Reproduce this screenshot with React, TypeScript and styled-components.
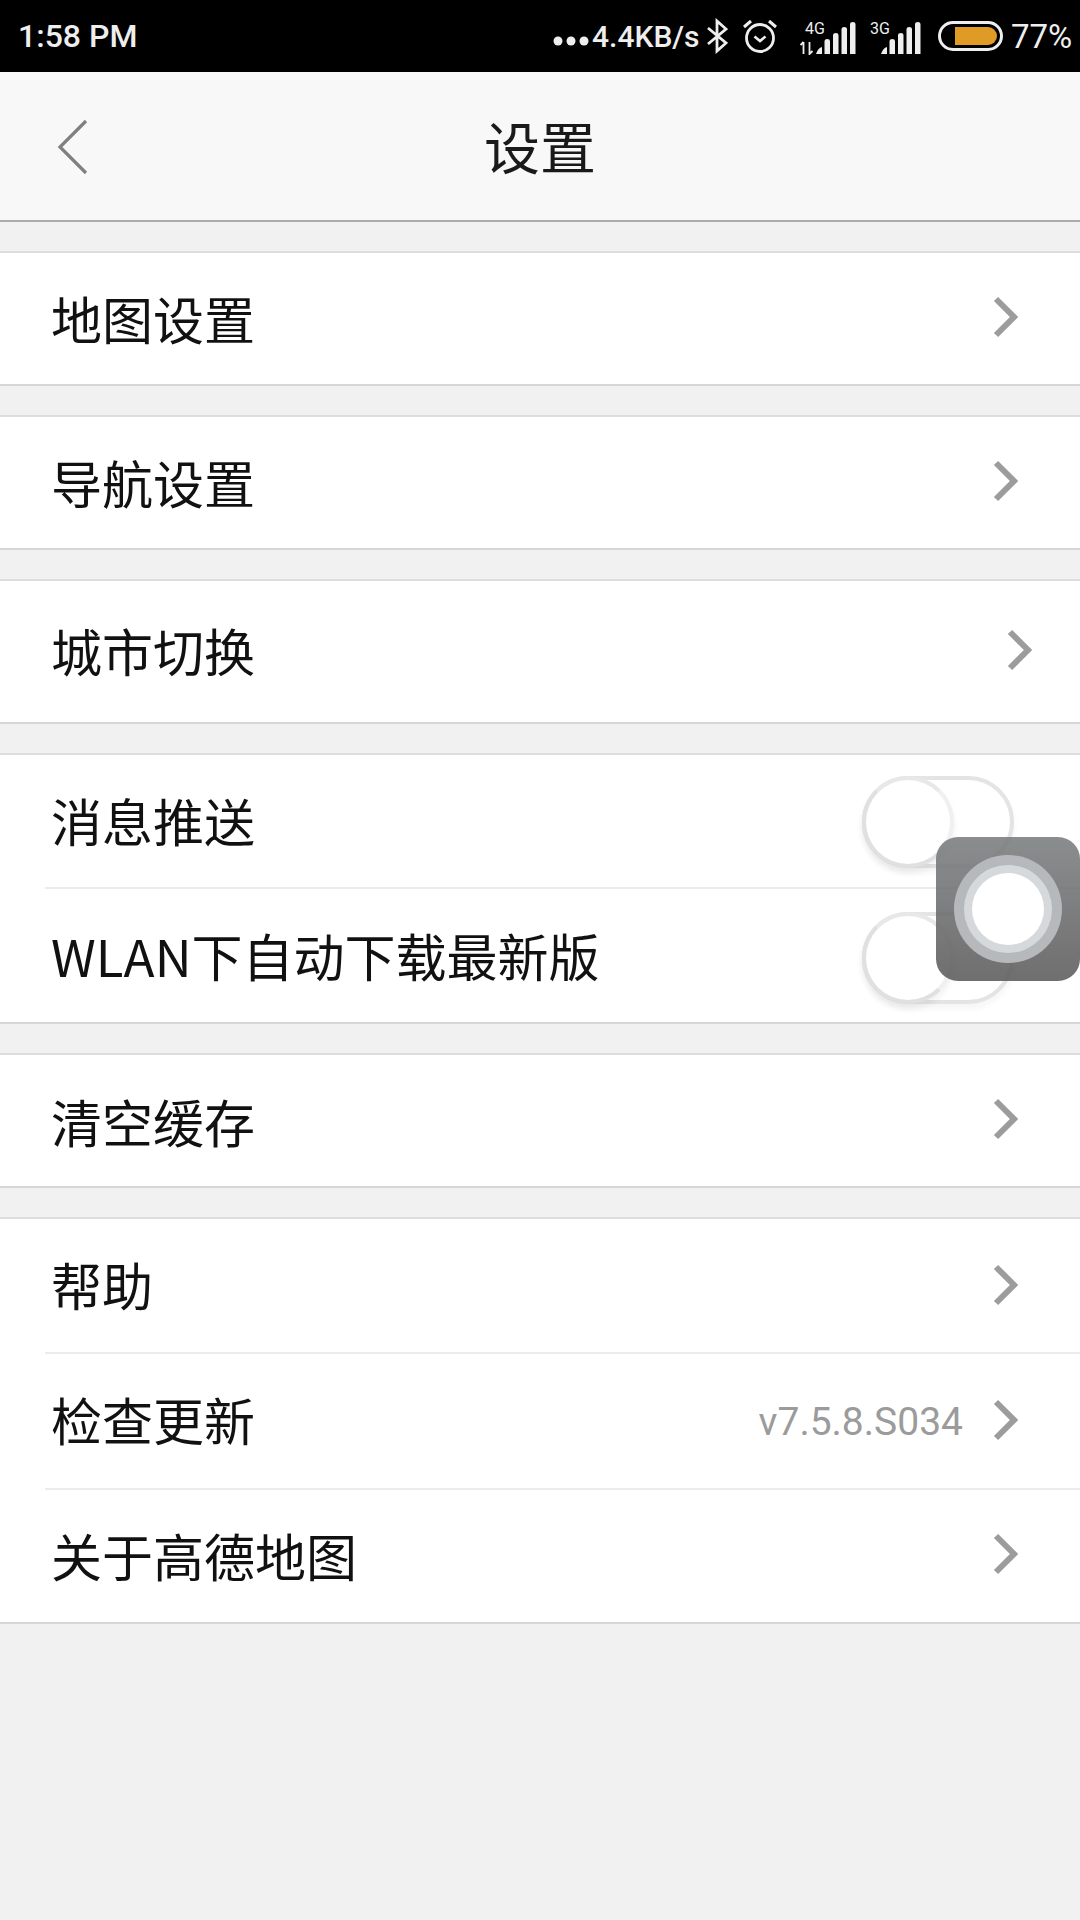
import React from 'react'
import styled, { createGlobalStyle } from 'styled-components'

const GlobalStyle = createGlobalStyle`
  html, body { margin: 0; padding: 0; background: #f1f1f1; }
  * { box-sizing: border-box; }
`

const Page = styled.div`
  position: relative;
  width: 1080px;
  height: 1920px;
  overflow: hidden;
  background: #f1f1f1;
  font-family: "Noto Sans CJK SC", "Noto Sans", sans-serif;
`

const StatusBar = styled.div`
  height: 72px;
  background: #000;
  color: #eee;
  display: flex;
  align-items: center;
  padding: 0 8px 0 18px;
  font-family: Roboto, sans-serif;
`

const Clock = styled.span`
  font-size: 32px;
  font-weight: 500;
  flex: 1;
`

const StatusGroup = styled.div`
  display: flex;
  align-items: center;
`

const Dots = styled.svg`
  margin-right: 3px;
  margin-top: 10px;
`

const Speed = styled.span`
  font-size: 30px;
  font-weight: 500;
  width: 112px;
  white-space: nowrap;
`

const StatusIcon = styled.svg<{ $left: number }>`
  display: block;
  margin-left: ${(p) => p.$left}px;
`

const Percent = styled.span`
  font-size: 33px;
  margin-left: 8px;
  width: 61px;
`

const Header = styled.div`
  height: 150px;
  background: #f8f8f8;
  border-bottom: 2px solid #ababab;
  display: flex;
  align-items: center;
  justify-content: center;
  position: relative;
`

const BackIcon = styled.svg`
  position: absolute;
  left: 57px;
  top: 46px;
`

const Title = styled.h1`
  margin: 0 0 4px;
  font-size: 56px;
  font-weight: 400;
  color: #1a1a1a;
`

const List = styled.div`
  display: flex;
  flex-direction: column;
  gap: 29px;
  padding-top: 29px;
`

const Group = styled.div`
  background: #fff;
  border-top: 2px solid #dddddd;
  border-bottom: 2px solid #d6d6d6;
`

const Row = styled.div<{ $height: number; $divider?: boolean }>`
  height: ${(p) => p.$height}px;
  position: relative;
  display: flex;
  align-items: center;
  padding: 0 0 0 51px;
  ${(p) =>
    p.$divider &&
    `&::after {
      content: '';
      position: absolute;
      left: 45px;
      right: 0;
      bottom: 0;
      height: 2px;
      background: #ececec;
    }`}
`

// $lift nudges the text up (or down, when negative) inside its row
const Label = styled.span<{ $lift?: number }>`
  flex: 1;
  font-size: 51px;
  color: #111;
  white-space: nowrap;
  margin-top: ${(p) => -2 * (p.$lift ?? 0)}px;
`

const Version = styled.span`
  font-family: Roboto, sans-serif;
  font-size: 39px;
  color: #9b9b9b;
  margin-right: 28px;
`

const Chevron = styled.svg<{ $right: number }>`
  margin-right: ${(p) => p.$right}px;
  margin-top: -4px;
  display: block;
`

const ToggleTrack = styled.div<{ $offset: number }>`
  position: relative;
  width: 152px;
  height: 92px;
  margin-right: 66px;
  margin-top: ${(p) => p.$offset}px;
  border: 4px solid #e4e4e4;
  border-radius: 46px;
  box-shadow: 0 5px 6px rgba(0, 0, 0, 0.04);
`

const ToggleKnob = styled.div`
  position: absolute;
  left: -4px;
  top: -4px;
  width: 92px;
  height: 92px;
  border-radius: 50%;
  background: #fff;
  border: 4px solid #e0e0e0;
  border-right-color: #f0f0f0;
  border-top-color: #e8e8e8;
  box-shadow: 0 5px 6px rgba(0, 0, 0, 0.06);
`

const FloatingBall = styled.div`
  position: absolute;
  left: 936px;
  top: 837px;
  width: 144px;
  height: 144px;
  border-radius: 22px;
  background: linear-gradient(180deg, rgba(122, 125, 127, 0.88), rgba(92, 91, 91, 0.88));
  display: flex;
  align-items: center;
  justify-content: center;
`

const BallRing = styled.div`
  width: 108px;
  height: 108px;
  border-radius: 50%;
  background: #b6b9bb;
  display: flex;
  align-items: center;
  justify-content: center;
`

const BallInnerRing = styled.div`
  width: 88px;
  height: 88px;
  border-radius: 50%;
  background: #d6d9db;
  display: flex;
  align-items: center;
  justify-content: center;
`

const BallCore = styled.div`
  width: 72px;
  height: 72px;
  border-radius: 50%;
  background: #fff;
`

const RowChevron: React.FC<{ right?: number }> = ({ right = 61 }) => (
  <Chevron $right={right} width="28" height="44" viewBox="0 0 28 44">
    <path d="M5 4 L23 22 L5 40" fill="none" stroke="#9c9c9c" strokeWidth="6" strokeLinejoin="miter" />
  </Chevron>
)

const Bars: React.FC<{ x: number }> = ({ x }) => (
  <path
    transform={`translate(${x} 0)`}
    d="M0 37h6v-7q-4 1-6 7zM8.500 37h5.500V24q0-2-2.700-2t-2.800 2zM17 37h5.500V18q0-2-2.700-2t-2.800 2zM25.500 37h5.500V12q0-2-2.700-2t-2.800 2zM34 37h5.500V7q0-2-2.700-2t-2.800 2z"
    fill="#eee"
  />
)

const App: React.FC = () => (
  <Page>
    <GlobalStyle />
    <StatusBar>
      <Clock>1:58 PM</Clock>
      <StatusGroup>
        <Dots width="36" height="10" viewBox="0 0 36 10">
          <circle cx="5" cy="5" r="4.500" fill="#eee" />
          <circle cx="18" cy="5" r="4.500" fill="#eee" />
          <circle cx="31" cy="5" r="4.500" fill="#eee" />
        </Dots>
        <Speed>4.4KB/s</Speed>
        <StatusIcon $left={2} width="22" height="36" viewBox="0 0 22 36">
          <path d="M2 10 L20 25 L11 33 V3 L20 11 L2 26" fill="none" stroke="#eee" strokeWidth="2.800" />
        </StatusIcon>
        <StatusIcon $left={14} width="36" height="36" viewBox="0 0 36 36">
          <circle cx="18" cy="20" r="13.500" fill="none" stroke="#eee" strokeWidth="2.800" />
          <path d="M12.500 18.500 L18 23 L23.500 18.500" fill="none" stroke="#eee" strokeWidth="2.600" />
          <path d="M2 9 L9 3 M34 9 L27 3" stroke="#eee" strokeWidth="3" />
        </StatusIcon>
        <StatusIcon $left={22} width="58" height="38" viewBox="0 0 58 38">
          <text x="5" y="17" fontFamily="Roboto, sans-serif" fontSize="16" fill="#eee">4G</text>
          <path d="M3.500 37V25M0.500 28l3-3M9.500 25v12l3-3" fill="none" stroke="#eee" strokeWidth="1.800" />
          <Bars x={16} />
        </StatusIcon>
        <StatusIcon $left={12} width="52" height="38" viewBox="0 0 52 38">
          <text x="0" y="17" fontFamily="Roboto, sans-serif" fontSize="16" fill="#eee">3G</text>
          <Bars x={11} />
        </StatusIcon>
        <StatusIcon $left={16} width="65" height="30" viewBox="0 0 65 30">
          <rect x="1.500" y="1.500" width="62" height="27" rx="13.500" fill="none" stroke="#eee" strokeWidth="3" />
          <path d="M17 6h33a9 9 0 0 1 9 9a9 9 0 0 1-9 9H17z" fill="#e09a26" />
        </StatusIcon>
        <Percent>77%</Percent>
      </StatusGroup>
    </StatusBar>

    <Header>
      <BackIcon width="32" height="60" viewBox="0 0 32 60">
        <path d="M29 3 L3 29 L29 55" fill="none" stroke="#808080" strokeWidth="3.200" />
      </BackIcon>
      <Title>设置</Title>
    </Header>

    <List>
      <Group>
        <Row $height={131}>
          <Label $lift={1}>地图设置</Label>
          <RowChevron />
        </Row>
      </Group>
      <Group>
        <Row $height={131}>
          <Label $lift={1}>导航设置</Label>
          <RowChevron />
        </Row>
      </Group>
      <Group>
        <Row $height={141}>
          <Label $lift={1.5}>城市切换</Label>
          <RowChevron right={47} />
        </Row>
      </Group>
      <Group>
        <Row $height={134} $divider>
          <Label $lift={2}>消息推送</Label>
          <ToggleTrack $offset={0}>
            <ToggleKnob />
          </ToggleTrack>
        </Row>
        <Row $height={133}>
          <Label $lift={0.5}>WLAN下自动下载最新版</Label>
          <ToggleTrack $offset={5}>
            <ToggleKnob />
          </ToggleTrack>
        </Row>
      </Group>
      <Group>
        <Row $height={131}>
          <Label $lift={0}>清空缓存</Label>
          <RowChevron />
        </Row>
      </Group>
      <Group>
        <Row $height={135} $divider>
          <Label $lift={3}>帮助</Label>
          <RowChevron />
        </Row>
        <Row $height={136} $divider>
          <Label $lift={3}>检查更新</Label>
          <Version>v7.5.8.S034</Version>
          <RowChevron />
        </Row>
        <Row $height={132}>
          <Label $lift={1.500}>关于高德地图</Label>
          <RowChevron />
        </Row>
      </Group>
    </List>

    <FloatingBall>
      <BallRing>
        <BallInnerRing>
          <BallCore />
        </BallInnerRing>
      </BallRing>
    </FloatingBall>
  </Page>
)

export default App
